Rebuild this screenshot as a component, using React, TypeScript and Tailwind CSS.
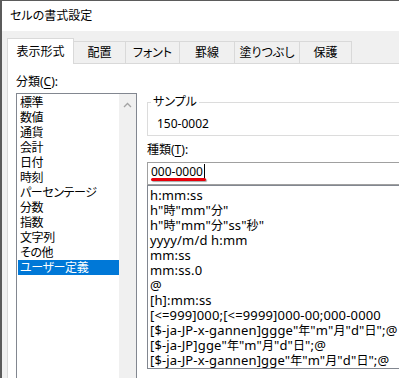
const categories = [
  '標準',
  '数値',
  '通貨',
  '会計',
  '日付',
  '時刻',
  'パーセンテージ',
  '分数',
  '指数',
  '文字列',
  'その他',
  'ユーザー定義',
]

const formats = [
  'h:mm:ss',
  'h"時"mm"分"',
  'h"時"mm"分"ss"秒"',
  'yyyy/m/d h:mm',
  'mm:ss',
  'mm:ss.0',
  '@',
  '[h]:mm:ss',
  '[<=999]000;[<=9999]000-00;000-0000',
  '[$-ja-JP-x-gannen]ggge"年"m"月"d"日";@',
  '[$-ja-JP]gge"年"m"月"d"日";@',
  '[$-ja-JP-x-gannen]gge"年"m"月"d"日";@',
]

const tabs = [
  { label: '配置', w: 'w-[52px]' },
  { label: 'フォント', w: 'w-[54px]' },
  { label: '罫線', w: 'w-[55px]' },
  { label: '塗りつぶし', w: 'w-[65px]' },
  { label: '保護', w: 'w-[52px]' },
]

// CJK glyphs in the format list are drawn a bit smaller than the latin text
function FormatText({ text }: { text: string }) {
  const parts = text.split(/([\u3000-\u9fff]+)/)
  return (
    <>
      {parts.map((p, i) =>
        /[\u3000-\u9fff]/.test(p) ? (
          <span key={i} className="text-[12px] tracking-normal">
            {p}
          </span>
        ) : (
          <span key={i}>{p}</span>
        ),
      )}
    </>
  )
}

export default function App() {
  return (
    <div className="flex h-[378px] w-[399px] flex-col overflow-hidden border-l-2 border-t border-[#5b5b5b] bg-white font-['Noto_Sans','Noto_Sans_CJK_JP',sans-serif] text-[12px] text-black [font-feature-settings:'palt']">
      <div className="flex h-[30px] shrink-0 items-center pl-[8px] leading-[16px]">セルの書式設定</div>

      <div className="flex min-h-0 flex-1 flex-col bg-[#f0f0f0] pl-[5px] pt-[7px]">
        <div className="relative z-10 flex h-[25px] shrink-0 items-end">
          <div className="-mb-px flex h-[26px] w-[67px] items-center justify-center border border-b-0 border-[#d9d9d9] bg-white leading-[16px]">
            表示形式
          </div>
          {tabs.map(tab => (
            <div
              key={tab.label}
              className={`flex h-[22px] ${tab.w} items-center justify-center border-r border-t border-[#d9d9d9] leading-[16px]`}
            >
              {tab.label}
            </div>
          ))}
        </div>

        <div className="flex min-h-0 flex-1 border-l border-t border-[#d9d9d9] bg-white pl-[8px]">
          {/* category list */}
          <div className="flex w-[121px] shrink-0 flex-col">
            <div className="mt-[10px] leading-[16px]">
              分類(<span className="underline underline-offset-2">C</span>):
            </div>
            <div className="mt-[3px] flex h-[300px] shrink-0 border border-[#828790]">
              <div className="flex-1 pl-[1px] pt-[1px]">
                {categories.map(cat => (
                  <div
                    key={cat}
                    className={`h-[15px] whitespace-nowrap px-[2px] leading-[15px] tracking-[-0.4px] ${
                      cat === 'ユーザー定義' ? 'bg-[#0078d7] text-white' : ''
                    }`}
                  >
                    {cat}
                  </div>
                ))}
              </div>
              <div className="flex w-[17px] justify-center bg-[#f0f0f0] pt-[8px]">
                <svg width="9" height="6" viewBox="0 0 9 6" className="block">
                  <path d="M1 5 L4.5 1.5 L8 5" fill="none" stroke="#a3a3a3" strokeWidth="1.3" />
                </svg>
              </div>
            </div>
          </div>

          {/* sample + type */}
          <div className="ml-[10px] flex w-[270px] shrink-0 flex-col">
            <fieldset className="mt-[30px] border border-[#dcdcdc]">
              <legend className="ml-[3px] px-[2px] leading-[16px]">サンプル</legend>
              <div className="pb-[3px] pl-[9px] pt-[6px] leading-[16px]">150-0002</div>
            </fieldset>

            <div className="mt-[6px] leading-[16px]">
              種類(<span className="underline underline-offset-2">T</span>):
            </div>

            <div className="relative mt-[4px] h-[23px] shrink-0 border border-[#a0a0a0] pl-[3px] pt-[1px] leading-[16px]">
              <span>000-0000</span>
              <span className="ml-px inline-block h-[15px] w-px bg-black align-[-3px]" />
              <div className="absolute left-[3px] top-[15px] h-[3px] w-[55px] rounded-sm bg-[#e8000b] shadow-[1px_1px_1px_rgba(0,0,0,0.35)]" />
            </div>

            <div className="h-[184px] shrink-0 overflow-hidden border border-[#828790] pl-[2px] pt-[2px] text-[13px] tracking-[0.15px]">
              {formats.map(f => (
                <div key={f} className="h-[15px] whitespace-nowrap leading-[15px]">
                  <FormatText text={f} />
                </div>
              ))}
            </div>
          </div>
        </div>
      </div>
    </div>
  )
}
